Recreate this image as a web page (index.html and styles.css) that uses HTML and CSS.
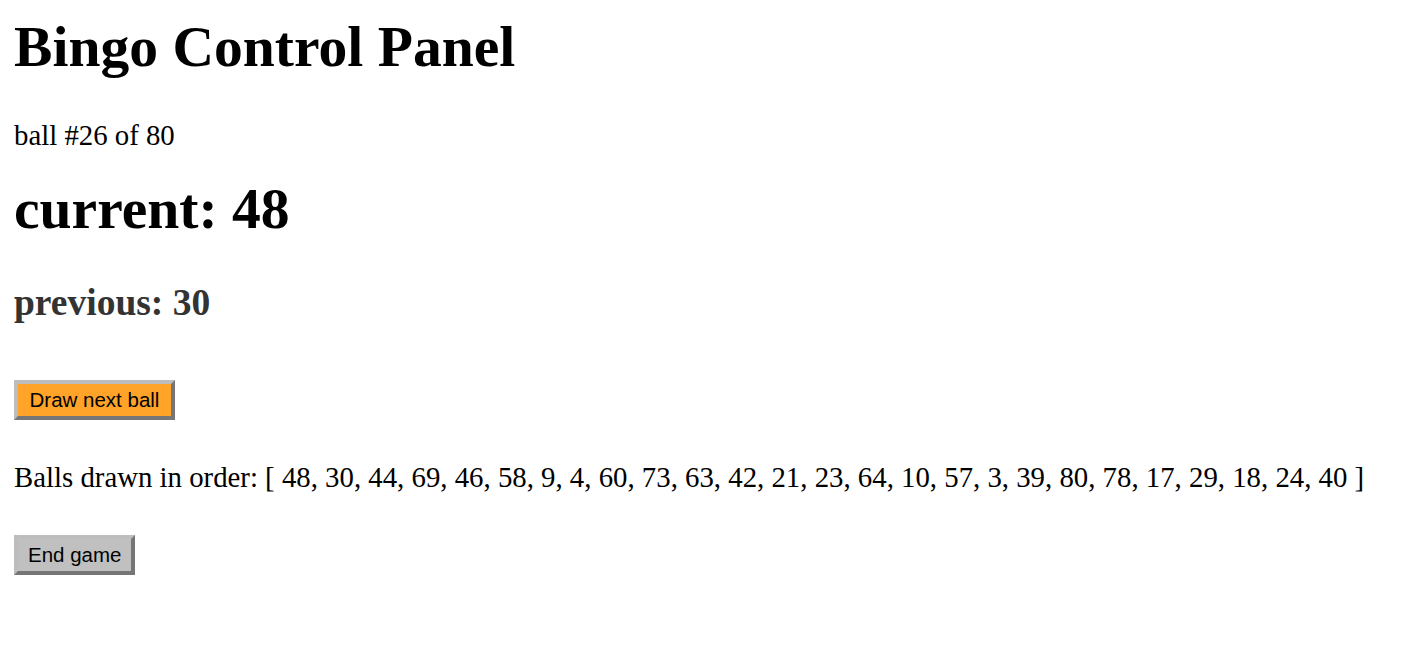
FILE: index.html
```html
<!DOCTYPE html>
<html>
<head>
<meta charset="utf-8">
<title>Bingo Control Panel</title>
<link rel="stylesheet" href="styles.css">
</head>
<body>
<main class="panel">
  <h1 class="title">Bingo Control Panel</h1>
  <p class="count">ball #26 of 80</p>
  <h1 class="current">current: 48</h1>
  <h2 class="previous">previous: 30</h2>
  <button class="btn btn-draw" type="button">Draw next ball</button>
  <p class="drawn">Balls drawn in order: [ 48, 30, 44, 69, 46, 58, 9, 4, 60, 73, 63, 42, 21, 23, 64, 10, 57, 3, 39, 80, 78, 17, 29, 18, 24, 40 ]</p>
  <button class="btn btn-end" type="button">End game</button>
</main>
</body>
</html>
```

FILE: styles.css
```css
html, body {
  margin: 0;
  padding: 0;
  background: #ffffff;
}

.panel {
  display: flex;
  flex-direction: column;
  align-items: flex-start;
  padding: 14px 14px 0 14px;
  font-family: "Liberation Serif", "Times New Roman", serif;
  color: #000000;
}

.title {
  margin: 0;
  font-size: 57.6px;
  font-weight: bold;
  line-height: normal;
}

.count {
  margin: 40px 0 0 0;
  font-size: 28.8px;
  line-height: normal;
}

.current {
  margin: 24px 0 0 0;
  font-size: 57.6px;
  font-weight: bold;
  line-height: normal;
}

.previous {
  margin: 40px 0 0 0;
  font-size: 37.5px;
  font-weight: bold;
  color: #333333;
  line-height: normal;
}

.btn {
  margin: 56px 0 0 0;
  font-family: "Liberation Sans", Arial, sans-serif;
  font-size: 20.5px;
  line-height: 32px;
  height: 40px;
  padding: 0 12px;
  color: #000000;
  border-width: 4px;
  border-style: solid;
  border-color: #bdbdbd #767676 #767676 #bdbdbd;
  box-sizing: border-box;
}

.btn-draw {
  background: #ffa329;
  padding: 0 11.5px;
}

.drawn {
  margin: 41px 0 0 0;
  font-size: 28.8px;
  line-height: normal;
}

.btn-end {
  margin-top: 41px;
  background: #c0c0c0;
  padding: 0 10px;
}
```
